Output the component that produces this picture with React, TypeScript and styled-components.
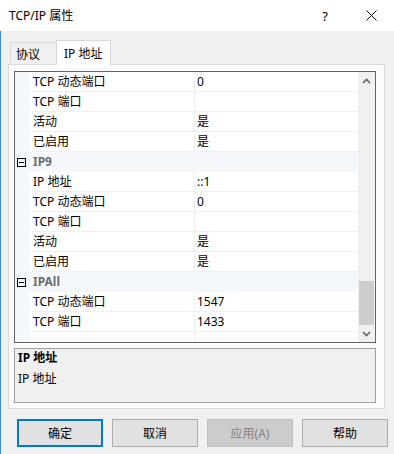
import React from 'react';
import styled, { createGlobalStyle, css } from 'styled-components';

const Global = createGlobalStyle`
  html, body { margin: 0; padding: 0; background: #f0f0f0; }
  body {
    font-family: "Noto Sans", "Noto Sans CJK SC", sans-serif;
    font-size: 12px;
    color: #000;
  }
  * { box-sizing: border-box; }
`;

const Window = styled.div`
  width: 394px;
  height: 454px;
  display: flex;
  flex-direction: column;
  background: #f0f0f0;
  overflow: hidden;
`;

const TitleBar = styled.div`
  height: 31px;
  flex-shrink: 0;
  background: #fff;
  display: flex;
  align-items: center;
  padding-left: 9px;
`;

const Title = styled.div`
  flex: 1;
  font-size: 12px;
  line-height: 16px;
`;

const TitleButton = styled.div`
  width: 46px;
  height: 31px;
  display: flex;
  align-items: center;
  justify-content: center;
  font-size: 13px;
  color: #000;
`;

const Body = styled.div`
  flex: 1;
  border-left: 1px solid #3a8ad6;
  padding: 9px 0 0 7px;
  display: flex;
  flex-direction: column;
`;

const TabStrip = styled.div`
  display: flex;
  align-items: flex-end;
  margin-left: 2px;
  height: 24px;
`;

const Tab = styled.div<{ $active?: boolean }>`
  border: 1px solid #d9d9d9;
  border-bottom: none;
  display: flex;
  align-items: center;
  ${(p) =>
    p.$active
      ? css`
          background: #fff;
          height: 25px;
          width: 55px;
          margin-bottom: -1px;
          padding: 0 0 1px 7px;
          position: relative;
          z-index: 1;
        `
      : css`
          background: #f0f0f0;
          height: 22px;
          width: 46px;
          border-right: none;
          padding: 1px 0 0 5px;
        `}
`;

const Panel = styled.div`
  width: 377px;
  border: 1px solid #d9d9d9;
  background: #fcfcfc;
  padding: 6px 8px 5px 5px;
  display: flex;
  flex-direction: column;
  gap: 5px;
`;

const Grid = styled.div`
  width: 362px;
  height: 272px;
  border: 1px solid #646464;
  display: flex;
  background: #fff;
`;

const Rows = styled.div`
  flex: 1;
  overflow: hidden;
`;

const Row = styled.div<{ $category?: boolean }>`
  display: grid;
  grid-template-columns: 14px 166px 1fr;
  height: 20px;
  background: ${(p) => (p.$category ? '#f4f7fc' : '#fff')};
`;

const Gutter = styled.div`
  background: #f4f7fc;
  display: flex;
  align-items: center;
  padding-left: 2px;
`;

const NameCell = styled.div`
  border-bottom: 1px solid #f0f0f0;
  border-right: 1px solid #f0f0f0;
  padding-left: 4px;
  line-height: 19px;
  white-space: nowrap;
`;

const ValueCell = styled.div`
  border-bottom: 1px solid #f0f0f0;
  padding-left: 2px;
  line-height: 19px;
  white-space: nowrap;
`;

const CategoryCell = styled.div`
  grid-column: 2 / 4;
  padding-left: 4px;
  line-height: 20px;
  font-weight: bold;
  color: #6d6d6d;
`;

const Expander = styled.div`
  width: 9px;
  height: 9px;
  border: 1px solid #000;
  display: flex;
  align-items: center;
  justify-content: center;
  &::after {
    content: '';
    width: 5px;
    height: 1px;
    background: #000;
  }
`;

const ScrollBar = styled.div`
  width: 17px;
  background: #f0f0f0;
  display: flex;
  flex-direction: column;
`;

const ScrollArrow = styled.div`
  height: 17px;
  display: flex;
  align-items: center;
  justify-content: center;
`;

const Track = styled.div`
  flex: 1;
  display: flex;
  flex-direction: column;
`;

const Thumb = styled.div`
  margin-left: 1px;
  width: 15px;
  background: #cdcdcd;
`;

const Description = styled.div`
  width: 362px;
  height: 55px;
  border: 1px solid #a0a0a0;
  background: #f0f0f0;
  padding: 0 0 0 3px;
  line-height: 20px;
`;

const DescTitle = styled.div`
  font-weight: bold;
  line-height: 18px;
  margin-bottom: 2px;
`;

const ButtonRow = styled.div`
  display: flex;
  gap: 9px;
  margin-top: 10px;
  padding-left: 9px;
`;

const Button = styled.div<{ $default?: boolean; $disabled?: boolean }>`
  width: 86px;
  height: 28px;
  display: flex;
  align-items: center;
  justify-content: center;
  background: #e1e1e1;
  border: 1px solid #adadad;
  ${(p) =>
    p.$default &&
    css`
      border: 2px solid #0078d7;
    `}
  ${(p) =>
    p.$disabled &&
    css`
      background: #cccccc;
      border-color: #bfbfbf;
      color: #838383;
    `}
`;

type Item =
  | { kind: 'prop'; name: string; value: string }
  | { kind: 'cat'; name: string }
  | { kind: 'empty' };

const items: Item[] = [
  { kind: 'prop', name: 'TCP 动态端口', value: '0' },
  { kind: 'prop', name: 'TCP 端口', value: '' },
  { kind: 'prop', name: '活动', value: '是' },
  { kind: 'prop', name: '已启用', value: '是' },
  { kind: 'cat', name: 'IP9' },
  { kind: 'prop', name: 'IP 地址', value: '::1' },
  { kind: 'prop', name: 'TCP 动态端口', value: '0' },
  { kind: 'prop', name: 'TCP 端口', value: '' },
  { kind: 'prop', name: '活动', value: '是' },
  { kind: 'prop', name: '已启用', value: '是' },
  { kind: 'cat', name: 'IPAll' },
  { kind: 'prop', name: 'TCP 动态端口', value: '1547' },
  { kind: 'prop', name: 'TCP 端口', value: '1433' },
  { kind: 'empty' },
];

const Chevron = ({ up }: { up?: boolean }) => (
  <svg width="9" height="6" viewBox="0 0 9 6">
    <path
      d={up ? 'M1 5 L4.5 1.5 L8 5' : 'M1 1 L4.5 4.5 L8 1'}
      fill="none"
      stroke="#606060"
      strokeWidth="1.6"
    />
  </svg>
);

const CloseIcon = () => (
  <svg width="11" height="11" viewBox="0 0 11 11">
    <path d="M0.5 0.5 L10.5 10.5 M10.5 0.5 L0.5 10.5" stroke="#000" strokeWidth="1" />
  </svg>
);

export default function App() {
  return (
    <>
      <Global />
      <Window>
        <TitleBar>
          <Title>TCP/IP 属性</Title>
          <TitleButton>?</TitleButton>
          <TitleButton>
            <CloseIcon />
          </TitleButton>
        </TitleBar>
        <Body>
          <TabStrip>
            <Tab>协议</Tab>
            <Tab $active>IP 地址</Tab>
          </TabStrip>
          <Panel>
            <Grid>
              <Rows>
                {items.map((it, i) =>
                  it.kind === 'cat' ? (
                    <Row key={i} $category>
                      <Gutter>
                        <Expander />
                      </Gutter>
                      <CategoryCell>{it.name}</CategoryCell>
                    </Row>
                  ) : it.kind === 'prop' ? (
                    <Row key={i}>
                      <Gutter />
                      <NameCell>{it.name}</NameCell>
                      <ValueCell>{it.value}</ValueCell>
                    </Row>
                  ) : (
                    <Row key={i}>
                      <Gutter />
                      <NameCell />
                      <ValueCell />
                    </Row>
                  )
                )}
              </Rows>
              <ScrollBar>
                <ScrollArrow>
                  <Chevron up />
                </ScrollArrow>
                <Track>
                  <Thumb style={{ marginTop: 192, height: 44 }} />
                </Track>
                <ScrollArrow>
                  <Chevron />
                </ScrollArrow>
              </ScrollBar>
            </Grid>
            <Description>
              <DescTitle>IP 地址</DescTitle>
              <div>IP 地址</div>
            </Description>
          </Panel>
          <ButtonRow>
            <Button $default>确定</Button>
            <Button>取消</Button>
            <Button $disabled>应用(A)</Button>
            <Button>帮助</Button>
          </ButtonRow>
        </Body>
      </Window>
    </>
  );
}
